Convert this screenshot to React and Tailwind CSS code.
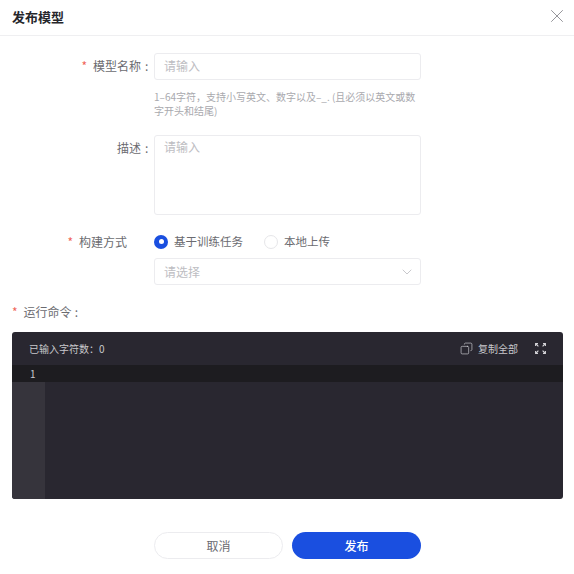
import React from 'react';
import { X, ChevronDown, Copy } from 'lucide-react';

const FormRow = ({ label, required, colon = true, labelClass = '', className = '', children }) => (
  <div className={`flex items-start ${className}`}>
    <div className={`flex h-[27px] w-[154px] shrink-0 items-center justify-end text-[12px] text-[#6b6b70] ${labelClass}`}>
      {required && <span className="mr-[6px] text-[#f0655a]">*</span>}
      <span>{label}</span>
      {colon && <span className="ml-[4px] w-[9px]">:</span>}
    </div>
    <div className="w-[267px]">{children}</div>
  </div>
);

const FullscreenIcon = () => (
  <svg width="11" height="11" viewBox="0 0 11 11" fill="none" stroke="#d4d4d8" strokeWidth="1.1">
    <path d="M0.6 3V0.6H3M8 0.6H10.4V3M10.4 8V10.4H8M3 10.4H0.6V8" />
    <path d="M1 1L3.4 3.4M10 1L7.6 3.4M10 10L7.6 7.6M1 10L3.4 7.6" />
  </svg>
);

export default function App() {
  return (
    <div className="flex h-[574px] w-[574px] flex-col bg-white font-['Noto_Sans_CJK_SC','Noto_Sans',sans-serif]">
      {/* Header */}
      <div className="flex h-[36px] shrink-0 items-center justify-between border-b border-[#efeff1] pl-[12px] pr-[6px]">
        <span className="-mt-[2px] text-[13px] font-semibold text-[#26262b]">发布模型</span>
        <X className="-mt-[4px] h-[22px] w-[22px] text-[#8c8c92]" strokeWidth={1} />
      </div>

      {/* Form */}
      <div className="flex flex-col pt-[17px]">
        <FormRow label="模型名称" required labelClass="pb-[2px]">
          <div className="flex h-[27px] items-center rounded-[3px] border border-[#ececef] px-[9px] pb-[2px] text-[12px] text-[#bdbdc2]">
            请输入
          </div>
          <p className="mt-[10px] text-[10px] leading-[14px] text-[#a9a9ae]">
            1–64字符，支持小写英文、数字以及–_. (且必须以英文或数字开头和结尾)
          </p>
        </FormRow>

        <FormRow label="描述" labelClass="pb-[2px]" className="mt-[17px]">
          <div className="h-[80px] rounded-[3px] border border-[#ececef] px-[9px] pt-[2px] text-[12px] text-[#bdbdc2]">
            请输入
          </div>
        </FormRow>

        <FormRow label="构建方式" required colon={false} labelClass="pr-[27px]" className="mt-[13px]">
          <div className="flex h-[27px] items-center text-[11.5px] text-[#6b6b70]">
            <span className="flex h-[14px] w-[14px] items-center justify-center rounded-full bg-[#1a4fe0]">
              <span className="h-[5px] w-[5px] rounded-full bg-white" />
            </span>
            <span className="ml-[6px]">基于训练任务</span>
            <span className="ml-[21px] h-[14px] w-[14px] rounded-full border border-[#e6e6e9]" />
            <span className="ml-[6px]">本地上传</span>
          </div>
          <div className="mt-[3px] flex h-[27px] items-center justify-between rounded-[3px] border border-[#ececef] pl-[9px] pr-[5px] text-[12px] text-[#bdbdc2]">
            <span>请选择</span>
            <ChevronDown className="h-[16px] w-[16px] text-[#b4b4b9]" strokeWidth={1.1} />
          </div>
        </FormRow>

        {/* Run command */}
        <div className="mt-[18px] flex h-[18px] items-center pl-[12px] text-[12px] text-[#6b6b70]">
          <span className="mr-[6px] text-[#f0655a]">*</span>
          <span>运行命令</span>
          <span className="ml-[3px]">:</span>
        </div>

        <div className="mx-[12px] mt-[11px] flex h-[167px] w-[551px] flex-col overflow-hidden rounded-[3px] bg-[#292730]">
          <div className="flex h-[33px] shrink-0 items-center justify-between px-[17px] text-[10px] text-[#c8c8cc]">
            <span>已输入字符数：0</span>
            <div className="flex items-center">
              <Copy className="h-[13px] w-[13px] -scale-x-100 text-[#d4d4d8]" strokeWidth={1.2} />
              <span className="ml-[5px]">复制全部</span>
              <span className="ml-[17px] flex"><FullscreenIcon /></span>
            </div>
          </div>
          <div className="flex h-[17px] shrink-0 items-center bg-[#1d1c20] pl-[18px] text-[10px] text-[#c8c8cc]">1</div>
          <div className="flex-1">
            <div className="h-full w-[33px] bg-[#36343c]" />
          </div>
        </div>

        {/* Footer */}
        <div className="mt-[33px] flex justify-center gap-[9px] pl-[1px]">
          <button className="h-[27px] w-[129px] rounded-full border border-[#ececef] bg-white text-[12px] text-[#6b6b70]">取消</button>
          <button className="h-[27px] w-[129px] rounded-full bg-[#1a4fe0] text-[12px] font-medium text-white">发布</button>
        </div>
      </div>
    </div>
  );
}
